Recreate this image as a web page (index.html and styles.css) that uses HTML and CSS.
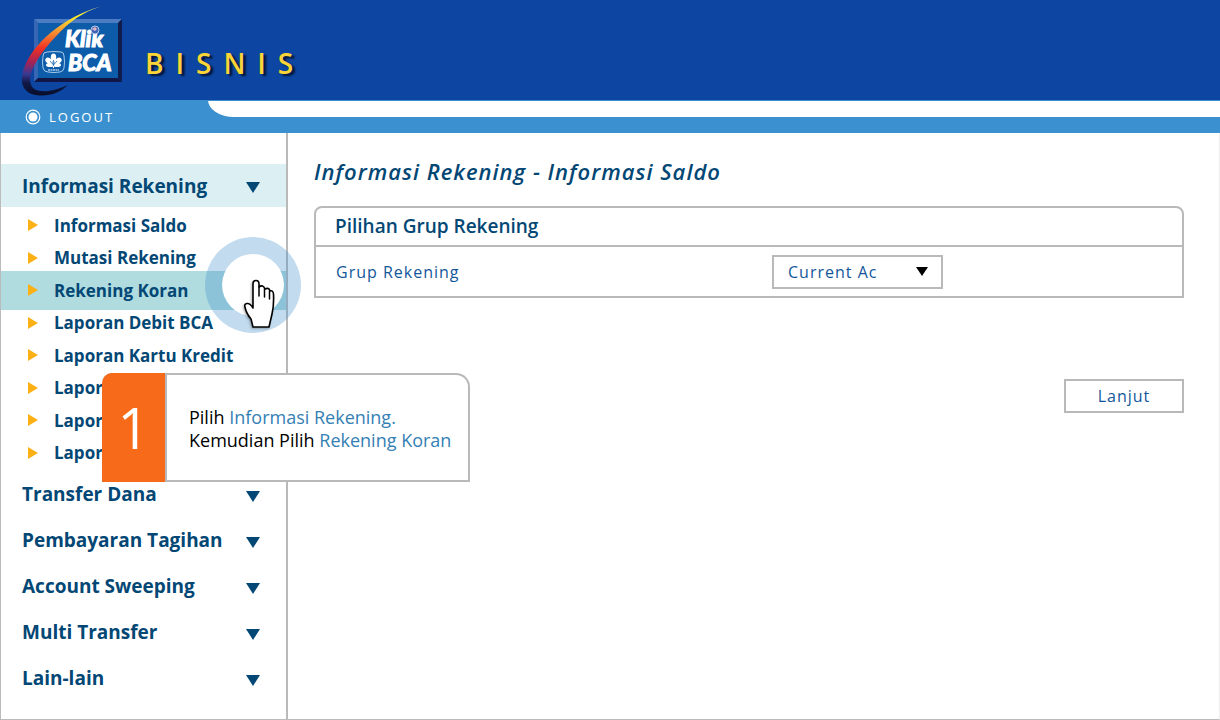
FILE: index.html
```
<!DOCTYPE html>
<html lang="id">
<head>
  <meta charset="utf-8">
  <title>KlikBCA Bisnis</title>
  <link rel="stylesheet" href="styles.css">
</head>
<body>
  <header class="header">
    <svg class="logo" width="110" height="100" viewBox="0 0 110 100" role="img" aria-label="Klik BCA">
      <defs>
        <linearGradient id="swoosh" x1="0" y1="1" x2="0" y2="0">
          <stop offset="0" stop-color="#080d28"/>
          <stop offset="0.14" stop-color="#101846"/>
          <stop offset="0.24" stop-color="#3a3a94"/>
          <stop offset="0.36" stop-color="#a02358"/>
          <stop offset="0.52" stop-color="#ee3024"/>
          <stop offset="0.72" stop-color="#f79a32"/>
          <stop offset="0.88" stop-color="#fff02a"/>
          <stop offset="1" stop-color="#f0ee8c"/>
        </linearGradient>
      </defs>
      <path d="M19 19h88l-4 4H23z" fill="#4d7cc2"/>
      <path d="M19 19l4 4v55l-4 4z" fill="#3766b4"/>
      <path d="M107 19v63l-4-4V23z" fill="#101d4c"/>
      <path d="M19 82l4-4h80l4 4z" fill="#101746"/>
      <path d="M23 23h80v55H23z" fill="#0c5caa"/>
      <path d="M91 5C57 13 20 38 9 68C3 85 10 95 25 95.500C36 96 46 92 53 85C40 91 25 94 18 88C8 76 27 50 46 31C59 18 74 9 91 5z" fill="url(#swoosh)"/>
      <text class="logo-text" x="50" y="47">Klik</text>
      <text class="logo-text" x="53" y="71">BCA</text>
      <circle cx="80" cy="30" r="4" fill="#3f64b8" stroke="#b9c7e8" stroke-width="1"/>
      <path d="M77 29l3-2 2 2-2 2z" fill="#e3b6c3"/>
      <path d="M32 52q7-1 14 0q3 0 3 4q1 6 0 12q0 3-4 4q-6 1-12 0q-4 0-5-4q-1-6 0-12q0-4 4-4z" fill="none" stroke="#a9cbea" stroke-width="1"/>
      <g fill="#fff">
        <ellipse cx="38.500" cy="57.500" rx="2.700" ry="4"/>
        <ellipse cx="34" cy="61" rx="4" ry="2.700" transform="rotate(35 34 61)"/>
        <ellipse cx="43" cy="61" rx="4" ry="2.700" transform="rotate(-35 43 61)"/>
        <ellipse cx="35" cy="65" rx="4" ry="2"/>
        <ellipse cx="42" cy="65" rx="4" ry="2"/>
        <path d="M38 60h1v8h-1z"/>
      </g>
      <path d="M38.500 60v6M35 61l3.500 4 3.500-4" fill="none" stroke="#0c5caa" stroke-width="0.700"/>
      <path d="M33 70h11" stroke="#a9cbea" stroke-width="1.500" stroke-dasharray="2 0.500"/>
    </svg>
    <span class="brand">BISNIS</span>
  </header>
  <nav class="topbar">
    <a class="logout" href="#">
      <svg width="16" height="16" viewBox="0 0 16 16" aria-hidden="true">
        <circle cx="8" cy="8" r="6.800" fill="none" stroke="#fff" stroke-width="1.200"/>
        <circle cx="8" cy="8" r="4.500" fill="#fff"/>
      </svg>
      LOGOUT
    </a>
    <div class="topbar-curve"></div>
  </nav>

  <div class="page">
    <nav class="sidebar">
      <button class="menu open" type="button" aria-expanded="true">Informasi Rekening</button>
      <ul class="submenu">
        <li><a href="#">Informasi Saldo</a></li>
        <li><a href="#">Mutasi Rekening</a></li>
        <li class="active"><a href="#">Rekening Koran</a></li>
        <li><a href="#">Laporan Debit BCA</a></li>
        <li><a href="#">Laporan Kartu Kredit</a></li>
        <li><a href="#">Lapor</a></li>
        <li><a href="#">Lapor</a></li>
        <li><a href="#">Lapor</a></li>
      </ul>
      <button class="menu" type="button">Transfer Dana</button>
      <button class="menu" type="button">Pembayaran Tagihan</button>
      <button class="menu" type="button">Account Sweeping</button>
      <button class="menu" type="button">Multi Transfer</button>
      <button class="menu" type="button">Lain-lain</button>
    </nav>

    <main class="content">
      <h1>Informasi Rekening - Informasi Saldo</h1>
      <section class="panel">
        <h2>Pilihan Grup Rekening</h2>
        <div class="panel-row">
          <label for="grup">Grup Rekening</label>
          <div class="select">
            <select id="grup">
              <option>Current Ac</option>
            </select>
          </div>
        </div>
      </section>
      <div class="actions">
        <button class="next" type="button">Lanjut</button>
      </div>
    </main>
  </div>

  <!-- tutorial overlay -->
  <div class="pulse"></div>
  <svg class="pointer" width="32" height="50" viewBox="0 0 32 50" aria-hidden="true">
    <path d="M9 48L7 40Q2 34 1 28Q0 25 3 24.500Q6 24 9 29V5Q9 1.500 12 1.500Q15 1.500 15 5V8Q19 5 21 10Q25 8 26 12Q29 11 29.500 15Q30 27 28 35L25 48z" fill="#fff" stroke="#000" stroke-width="1.600" stroke-linejoin="round"/>
    <path d="M15 8v9M20.500 10v8M25.500 12v8" fill="none" stroke="#000" stroke-width="1.500" stroke-linecap="round"/>
  </svg>
  <div class="callout">
    <div class="step">1</div>
    <p>Pilih <em>Informasi Rekening.</em><br>Kemudian Pilih <em>Rekening Koran</em></p>
  </div>
</body>
</html>
```
FILE: styles.css
```
* {
  box-sizing: border-box;
}
body, html {
  height: 100%;
  margin: 0;
}
body {
  display: flex;
  flex-direction: column;
  position: relative;
  font-family: "Open Sans", "Noto Sans", sans-serif;
  color: #034775;
  background: #fff;
}
h1, h2, p, ul {
  margin: 0;
  padding: 0;
  font-weight: normal;
}
button, select {
  font-family: inherit;
  color: inherit;
  background: none;
  border: 0;
  border-radius: 0;
}
a {
  color: inherit;
  text-decoration: none;
}

.header {
  display: flex;
  height: 100px;
  padding-left: 15px;
  background: #0d46a2;
}
.logo-text {
  font: italic 900 23px Lato, "Open Sans", sans-serif;
  fill: #fff;
  stroke: #fff;
  stroke-width: 1px;
}
.brand {
  padding: 42px 0 0 20px;
  font-size: 28px;
  font-weight: 600;
  line-height: 42px;
  letter-spacing: 12px;
  color: #fbd437;
  text-shadow: 3px 2px 2px #051638;
}
.topbar {
  display: flex;
  justify-content: space-between;
  height: 33px;
  background: #3b91cf;
}
.logout {
  display: flex;
  align-items: center;
  gap: 8px;
  width: 208px;
  padding-left: 25px;
  font-size: 13px;
  letter-spacing: 2px;
  color: #fff;
}
.topbar-curve {
  flex: 1;
  height: 17px;
  border-top: 1px solid #3b91cf;
  border-radius: 0 0 0 26px / 0 0 0 17px;
  background: #fff;
}

.page {
  display: flex;
  flex: 1;
  border: 1px solid #bbb;
  border-top: 0;
  border-right-color: #eee;
}
.sidebar {
  width: 287px;
  padding-top: 31px;
  border-right: 2px solid #b9b9b9;
}
.menu {
  display: flex;
  align-items: center;
  justify-content: space-between;
  width: 100%;
  height: 46px;
  padding: 0 26px 0 21px;
  font-size: 19px;
  font-weight: bold;
}
.menu::after {
  content: "";
  margin-top: 4px;
  border: 7px solid transparent;
  border-top: 11px solid #034775;
  border-bottom: 0;
}
.menu.open {
  height: 43px;
  background: #dcf0f4;
}
.submenu {
  display: grid;
  grid-auto-rows: 1fr;
  height: 260px;
  margin: 2px 0;
  list-style: none;
  font-size: 17px;
  font-weight: bold;
}
.submenu li {
  display: flex;
  align-items: center;
  gap: 16px;
  padding-left: 27px;
}
.submenu li::before {
  content: "";
  border: 6px solid transparent;
  border-left: 10px solid #fbb116;
  border-right: 0;
}
.submenu .active {
  margin: -3px 0;
  background: #b0dbdf;
}

.content {
  flex: 1;
  padding: 21px 35px 0 26px;
}
h1 {
  font-size: 22px;
  line-height: 34px;
  font-style: italic;
  font-weight: 600;
  letter-spacing: 1px;
}
.panel {
  margin-top: 18px;
  border: 2px solid #b9b9b9;
  border-radius: 8px 8px 0 0;
}
h2 {
  padding-left: 19px;
  font-size: 19px;
  line-height: 37px;
  font-weight: 600;
  border-bottom: 2px solid #b9b9b9;
}
.panel-row {
  display: grid;
  grid-template-columns: 1fr 410px;
  align-items: center;
  height: 49px;
  padding-left: 20px;
  font-size: 16px;
  letter-spacing: 1px;
  color: #13579a;
}
.select {
  display: flex;
  align-items: center;
  position: relative;
  width: 171px;
}
.select::after {
  content: "";
  position: absolute;
  right: 15px;
  border: 6px solid transparent;
  border-top: 9px solid #000;
  border-bottom: 0;
  pointer-events: none;
}
.select select {
  appearance: none;
  width: 100%;
  height: 34px;
  padding: 0 32px 0 14px;
  font-size: 16px;
  letter-spacing: 1px;
  border: 2px solid #b9b9b9;
}
.actions {
  display: flex;
  justify-content: flex-end;
  margin-top: 81px;
}
.next {
  width: 120px;
  height: 34px;
  font-size: 16px;
  letter-spacing: 1px;
  color: #13579a;
  border: 2px solid #b9b9b9;
}

.pulse {
  position: absolute;
  left: 205px;
  top: 237px;
  width: 96px;
  height: 96px;
  border: 17px solid rgba(69, 145, 205, 0.33);
  border-radius: 50%;
  background: #fff;
  background-clip: padding-box;
}
.pointer {
  position: absolute;
  left: 244px;
  top: 279px;
  filter: drop-shadow(-1px 1px 1px rgba(0, 0, 0, 0.3));
}
.callout {
  display: flex;
  position: absolute;
  left: 102px;
  top: 373px;
  width: 368px;
  height: 109px;
  border: 2px solid #b9b9b9;
  border-left: 0;
  border-radius: 10px 14px 0 0;
  background: #fff;
}
.step {
  width: 65px;
  margin: -2px 0;
  border-right: 2px solid #b9b9b9;
  border-radius: 10px 0 0 0;
  font-size: 56px;
  line-height: 109px;
  text-align: center;
  color: #fff;
  background: #f66a19;
}
.callout p {
  padding: 31px 0 0 22px;
  font-size: 18px;
  line-height: 23px;
  white-space: nowrap;
  color: #000;
}
.callout em {
  font-style: normal;
  color: #3480b4;
}
```
